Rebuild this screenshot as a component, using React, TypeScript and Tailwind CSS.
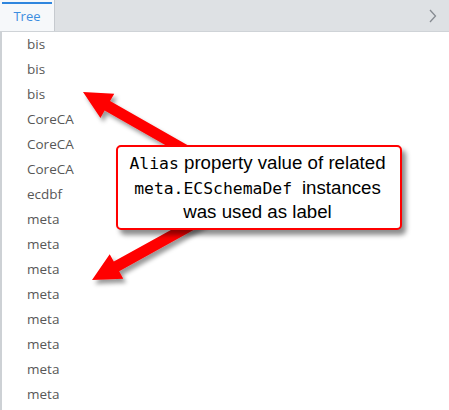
const items = [
  "bis",
  "bis",
  "bis",
  "CoreCA",
  "CoreCA",
  "CoreCA",
  "ecdbf",
  "meta",
  "meta",
  "meta",
  "meta",
  "meta",
  "meta",
  "meta",
  "meta",
];

// arrow pointing left from origin: tip at 0,0
const arrowPoints = (len: number) =>
  `0,0 28,-14 28,-5.5 ${len},-5.5 ${len},5.5 28,5.5 28,14`;

const App = () => {
  return (
    <div className="relative w-[449px] h-[410px] overflow-hidden bg-white font-['Open_Sans',sans-serif]">
      {/* tab strip */}
      <div className="flex h-[32px] bg-[#dee1e4] border-b border-[#cfd3d7]">
        <div className="relative w-[55px] bg-[#f6f8fa] border-r border-[#c6cacf] flex items-center justify-center">
          <div className="absolute top-[2px] left-[2px] right-[2px] h-[2px] bg-[#2f86de]" />
          <span className="text-[13px] text-[#3d8ee0] mt-[2px]">Tree</span>
        </div>
        <div className="flex-1" />
        <div className="w-[20px] flex items-center">
          <svg width="8" height="14" viewBox="0 0 8 14" className="mt-[1px]">
            <polyline points="1,1 6.5,7 1,13" fill="none" stroke="#868b91" strokeWidth="1.3" />
          </svg>
        </div>
      </div>

      {/* tree */}
      <div className="border-l-2 border-[#cdd1d5] h-[378px]">
        {items.map((label, i) => (
          <div key={i} className="h-[25px] flex items-center pl-[25px] text-[13.5px] text-[#575757]">
            {label}
          </div>
        ))}
      </div>

      {/* annotation arrows */}
      <svg className="absolute inset-0 pointer-events-none" width="449" height="410">
        <defs>
          <filter id="sh" x="-20%" y="-20%" width="140%" height="140%">
            <feDropShadow dx="3" dy="4" stdDeviation="2" floodColor="#000" floodOpacity="0.4" />
          </filter>
        </defs>
        <g filter="url(#sh)">
          <polygon points={arrowPoints(135)} fill="#ff0000" transform="translate(83,92) rotate(29.6)" />
          <polygon points={arrowPoints(130)} fill="#ff0000" transform="translate(92,280) rotate(-29)" />
        </g>
      </svg>

      {/* callout */}
      <div className="absolute left-[116px] top-[145px] w-[286px] h-[85px] bg-white border-2 border-[#ff0000] rounded-[5px] shadow-[4px_5px_5px_rgba(0,0,0,0.45)] flex flex-col items-center justify-center text-[18.7px] leading-[23.5px] text-black font-['Liberation_Sans',Arial,sans-serif]">
        <div className="pr-[3px]">
          <span className="font-['DejaVu_Sans_Mono',monospace] text-[16.4px]">Alias</span> property value of related
        </div>
        <div className="pr-[3px]">
          <span className="font-['DejaVu_Sans_Mono',monospace] text-[16.4px] whitespace-pre">meta.ECSchemaDef </span>
          instances
        </div>
        <div className="pr-[3px]">was used as label</div>
      </div>
    </div>
  );
};

export default App;
